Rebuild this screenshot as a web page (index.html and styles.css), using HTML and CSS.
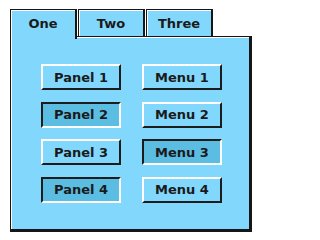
FILE: index.html
```html
<!DOCTYPE html>
<html>
<head>
<meta charset="utf-8">
<link rel="stylesheet" href="styles.css">
</head>
<body>
<div class="frame">
  <div class="tabs">
    <div class="tab active">One</div>
    <div class="tab">Two</div>
    <div class="tab">Three</div>
  </div>
  <div class="panel">
    <div class="grid">
      <div class="btn">Panel 1</div>
      <div class="btn">Menu 1</div>
      <div class="btn pressed">Panel 2</div>
      <div class="btn">Menu 2</div>
      <div class="btn">Panel 3</div>
      <div class="btn pressed">Menu 3</div>
      <div class="btn pressed">Panel 4</div>
      <div class="btn">Menu 4</div>
    </div>
  </div>
</div>
</body>
</html>
```

FILE: styles.css
```css
html, body {
  margin: 0;
  padding: 0;
  background: #ffffff;
}
body {
  font-family: "DejaVu Sans", "Verdana", sans-serif;
  font-weight: bold;
  font-size: 13px;
  color: #1a1a1a;
}
.frame {
  padding: 9px 0 0 10px;
  width: 242px;
}
.tabs {
  display: flex;
  gap: 1px;
  height: 27px;
}
.tab {
  box-sizing: border-box;
  width: 67px;
  height: 27px;
  background: #82d8fc;
  border-style: solid;
  border-color: #161616;
  border-width: 1px 2px 0 1px;
  box-shadow: inset 1px 1px 0 #ffffff;
  display: flex;
  align-items: center;
  justify-content: center;
  padding-top: 1px;
}
.tab.active {
  position: relative;
  z-index: 2;
  height: 30px;
  margin-bottom: -3px;
  padding-bottom: 3px;
}
.panel {
  position: relative;
  z-index: 1;
  box-sizing: border-box;
  width: 242px;
  height: 196px;
  background: #82d8fc;
  border-style: solid;
  border-color: #161616;
  border-width: 1px 3px 3px 1px;
  box-shadow: inset 1px 1px 0 #ffffff;
  padding: 27px 0 0 30px;
}
.grid {
  display: grid;
  grid-template-columns: 80px 80px;
  grid-auto-rows: 26px;
  column-gap: 21px;
  row-gap: 11.5px;
}
.btn {
  box-sizing: border-box;
  border: 2px solid;
  border-color: #ffffff #1c1c1c #1c1c1c #ffffff;
  background: #82d8fc;
  display: flex;
  align-items: center;
  justify-content: center;
}
.btn.pressed {
  border-color: #1c1c1c #ffffff #ffffff #1c1c1c;
  background: #5cbde2;
}
```
